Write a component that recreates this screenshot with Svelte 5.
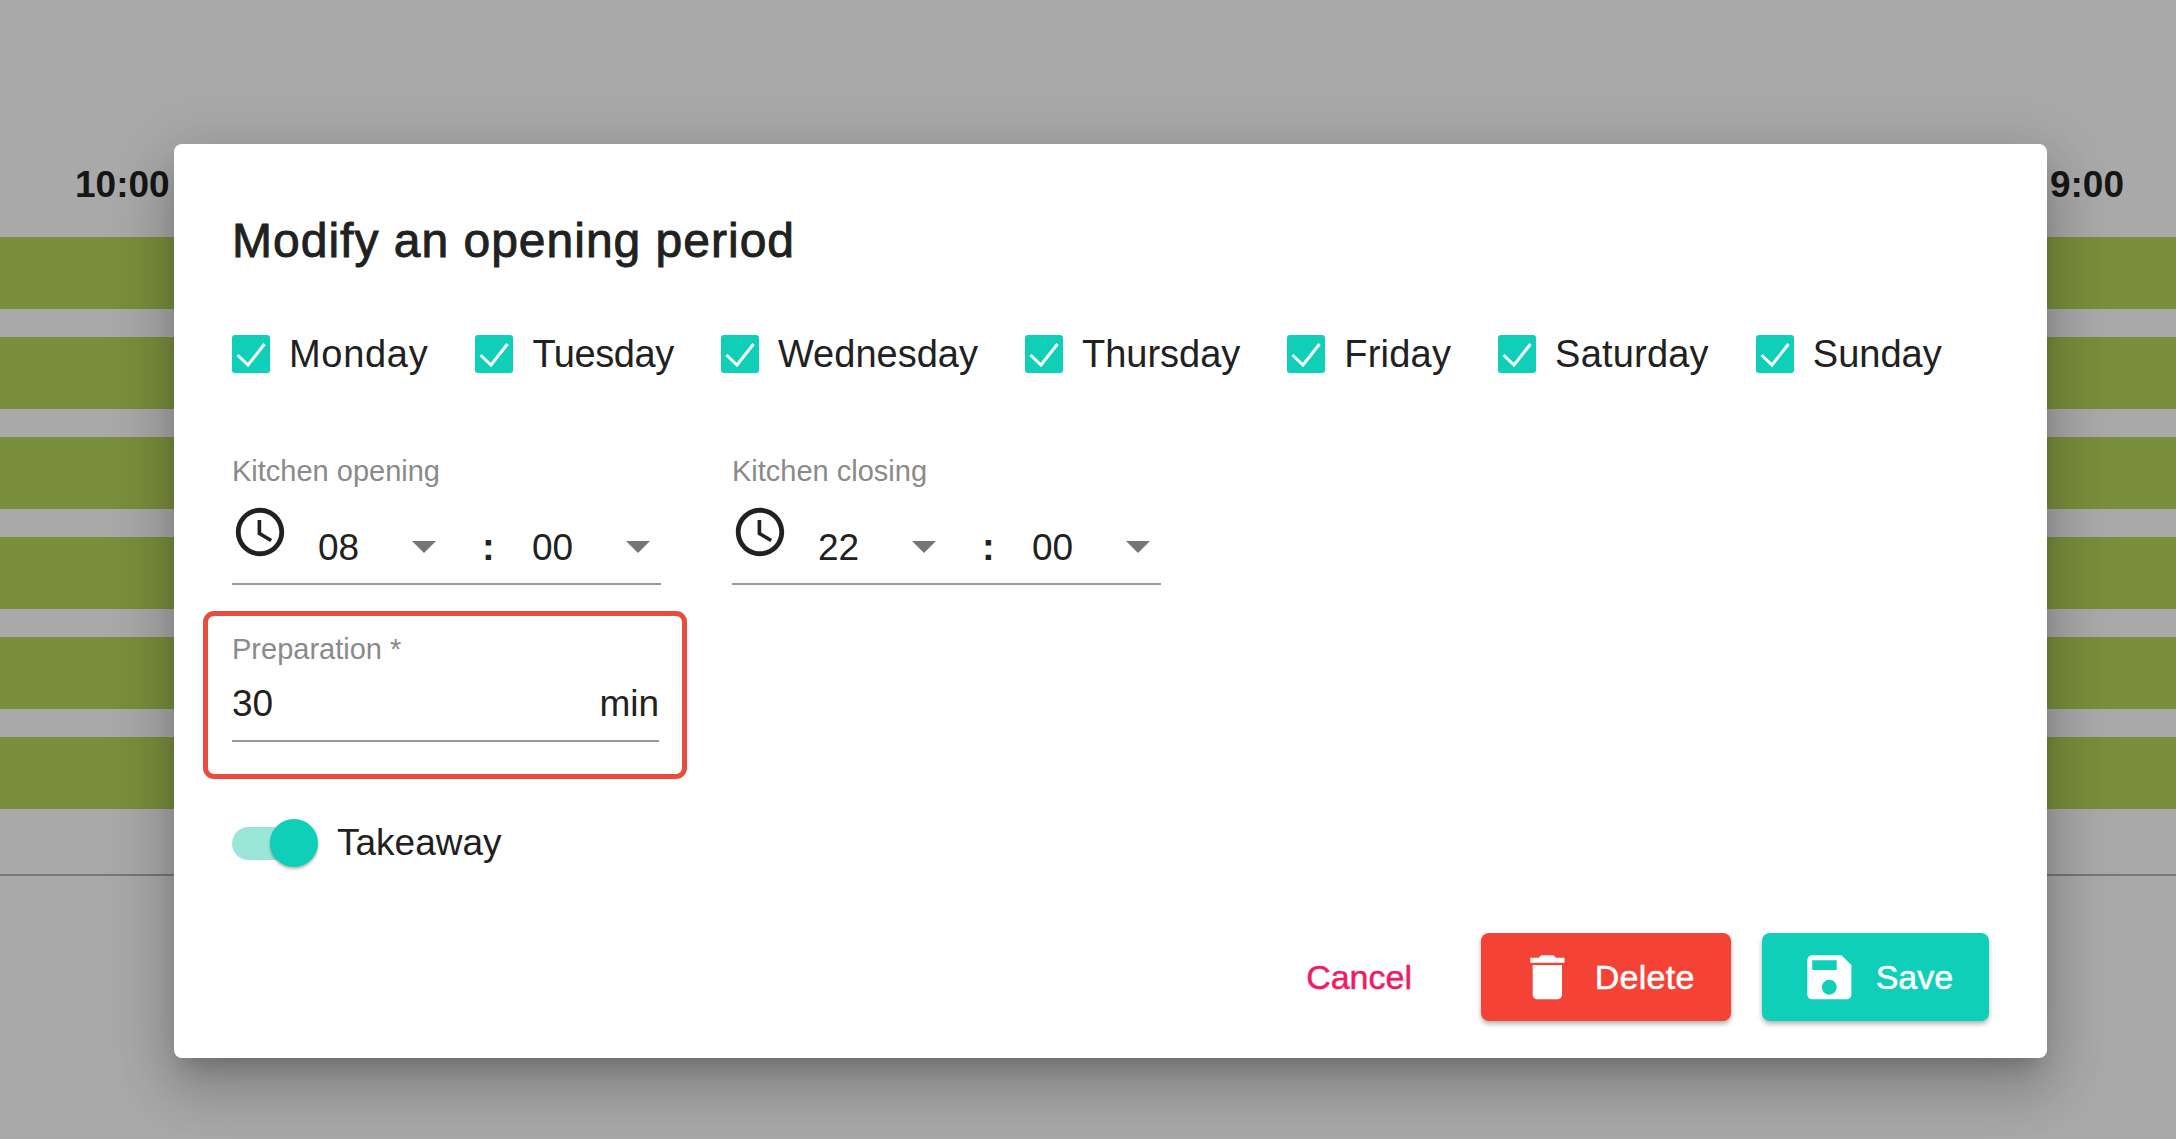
<script>
	const days = ['Monday', 'Tuesday', 'Wednesday', 'Thursday', 'Friday', 'Saturday', 'Sunday'];
	const bars = [1, 2, 3, 4, 5, 6];
	const periods = [
		{ label: 'Kitchen opening', hour: '08', minute: '00' },
		{ label: 'Kitchen closing', hour: '22', minute: '00' }
	];
</script>

<div class="page">
	<div class="hours">
		<span>10:00</span>
		<span>9:00</span>
	</div>
	<div class="bars">
		{#each bars as bar (bar)}
			<div class="bar"></div>
		{/each}
	</div>
	<div class="axis"></div>

	<div class="dialog">
		<h2 class="title">Modify an opening period</h2>

		<div class="days">
			{#each days as day (day)}
				<div class="day">
					<span class="check">
						<svg viewBox="0 0 38 38" width="38" height="38">
							<path d="M5.5 20 L16 30 L32.5 9" fill="none" stroke="#fff" stroke-width="3" />
						</svg>
					</span>
					<span class="day-name">{day}</span>
				</div>
			{/each}
		</div>

		<div class="times">
			{#each periods as period (period.label)}
				<div class="time-field">
					<div class="small-label">{period.label}</div>
					<div class="time-row">
						<svg class="clock" viewBox="0 0 24 24" width="58" height="58">
							<path d="M11.99 2C6.47 2 2 6.48 2 12s4.47 10 9.99 10C17.52 22 22 17.52 22 12S17.52 2 11.99 2zM12 20c-4.42 0-8-3.58-8-8s3.58-8 8-8 8 3.58 8 8-3.58 8-8 8z" />
							<path d="M12.5 7H11v6l5.25 3.15.75-1.23-4.5-2.67z" />
						</svg>
						<span class="select hour">
							<span>{period.hour}</span>
							<i class="arrow"></i>
						</span>
						<b class="colon">:</b>
						<span class="select minute">
							<span>{period.minute}</span>
							<i class="arrow"></i>
						</span>
					</div>
				</div>
			{/each}
		</div>

		<div class="highlight">
			<div class="small-label">Preparation *</div>
			<div class="prep-row">
				<span>30</span>
				<span>min</span>
			</div>
		</div>

		<div class="switch-row">
			<span class="switch">
				<span class="track"></span>
				<span class="knob"></span>
			</span>
			<span>Takeaway</span>
		</div>

		<div class="actions">
			<button class="cancel">Cancel</button>
			<button class="raised delete">
				<svg viewBox="0 0 24 24" width="58.7" height="58.7">
					<path d="M6 19c0 1.1.9 2 2 2h8c1.1 0 2-.9 2-2V7H6v12zM19 4h-3.5l-1-1h-5l-1 1H5v2h14V4z" />
				</svg>
				<span>Delete</span>
			</button>
			<button class="raised save">
				<svg viewBox="0 0 24 24" width="58.7" height="58.7">
					<path d="M17 3H5c-1.11 0-2 .9-2 2v14c0 1.1.89 2 2 2h14c1.1 0 2-.9 2-2V7l-4-4zm-5 16c-1.66 0-3-1.34-3-3s1.34-3 3-3 3 1.34 3 3-1.34 3-3 3zm3-10H5V5h10v4z" />
				</svg>
				<span>Save</span>
			</button>
		</div>
	</div>
</div>

<style>
	:global(body) {
		margin: 0;
		background: #a9a9a9;
		font-family: 'Liberation Sans', Arial, sans-serif;
		color: #212121;
	}

	.page {
		position: relative;
		height: 1139px;
		overflow: hidden;
		background: #a9a9a9;
	}

	.hours {
		display: flex;
		justify-content: space-between;
		height: 237px;
		padding: 163px 52px 0 75px;
		box-sizing: border-box;
		font-size: 37px;
		line-height: 43px;
		font-weight: 700;
		color: #161616;
	}

	.bars {
		display: flex;
		flex-direction: column;
		gap: 28.5px;
	}

	.bar {
		height: 71.5px;
		background: #7a8f3c;
	}

	.axis {
		height: 2px;
		margin-top: 65px;
		background: #777;
	}

	.dialog {
		position: absolute;
		left: 174px;
		top: 144px;
		width: 1873px;
		height: 914px;
		box-sizing: border-box;
		padding: 0 58px;
		background: #fff;
		border-radius: 8px;
		box-shadow:
			0 15px 21px -10px rgba(0, 0, 0, 0.2),
			0 33px 53px 4px rgba(0, 0, 0, 0.14),
			0 12px 64px 11px rgba(0, 0, 0, 0.12);
	}

	.title {
		margin: 0;
		padding-top: 69px;
		font-size: 48px;
		line-height: 56px;
		font-weight: 400;
		letter-spacing: 1px;
		-webkit-text-stroke: 0.9px #212121;
	}

	.days {
		display: flex;
		gap: 47px;
		margin-top: 62px;
		font-size: 38px;
		line-height: 46px;
	}

	.day {
		display: flex;
		align-items: center;
		gap: 19px;
	}

	.day:first-child .day-name {
		letter-spacing: 0.7px;
	}

	.day:nth-child(2) .day-name {
		letter-spacing: -0.4px;
	}

	.day:nth-child(5) .day-name,
	.day:nth-child(6) .day-name {
		letter-spacing: 0.2px;
	}

	.check {
		display: block;
		width: 38px;
		height: 38px;
		border-radius: 3px;
		background: #0fcfb9;
	}

	.check svg {
		display: block;
	}

	.times {
		display: flex;
		gap: 71px;
		margin-top: 77px;
	}

	.time-field {
		width: 429px;
	}

	.small-label {
		font-size: 29px;
		line-height: 34px;
		color: #8a8a8a;
	}

	.time-row {
		display: flex;
		height: 83px;
		margin-top: 12px;
		border-bottom: 2.5px solid #999;
		font-size: 37px;
	}

	.clock {
		flex: none;
		margin-top: 3px;
		margin-left: -1px;
		fill: #212121;
	}

	.select {
		display: flex;
		align-items: flex-start;
		padding-top: 26px;
		line-height: 43px;
	}

	.hour {
		margin-left: 29px;
		width: 118px;
		justify-content: space-between;
	}

	.minute {
		margin-left: 39px;
		width: 118px;
		justify-content: space-between;
	}

	.arrow {
		display: block;
		margin-top: 15px;
		border-left: 12px solid transparent;
		border-right: 12px solid transparent;
		border-top: 12px solid #757575;
	}

	.colon {
		margin-left: 46px;
		padding-top: 26px;
		line-height: 43px;
		font-size: 38px;
		width: 11px;
	}

	.highlight {
		width: 484px;
		height: 168px;
		margin: 26px 0 0 -29px;
		box-sizing: border-box;
		padding: 16px 23px 0 24px;
		border: 5px solid #e74c3c;
		border-radius: 11px;
	}

	.prep-row {
		display: flex;
		justify-content: space-between;
		height: 58px;
		padding-top: 16px;
		font-size: 37px;
		line-height: 44px;
		border-bottom: 2.5px solid #999;
	}

	.switch-row {
		display: flex;
		align-items: center;
		gap: 19px;
		margin-top: 40px;
		font-size: 37px;
		line-height: 48px;
	}

	.switch {
		position: relative;
		display: block;
		width: 86px;
		height: 48px;
	}

	.track {
		position: absolute;
		left: 0;
		right: 8px;
		top: 8px;
		height: 33px;
		border-radius: 17px;
		background: #9ae6d8;
	}

	.knob {
		position: absolute;
		right: 0;
		top: 0;
		width: 48px;
		height: 48px;
		border-radius: 50%;
		background: #0fcfb9;
		box-shadow: 0 2px 3px rgba(0, 0, 0, 0.3);
	}

	.actions {
		display: flex;
		justify-content: flex-end;
		align-items: center;
		margin-top: 66px;
	}

	button {
		border: 0;
		padding: 0;
		font-family: inherit;
		font-size: 34px;
		background: none;
		-webkit-text-stroke: 0.5px currentColor;
	}

	.cancel {
		color: #f01c63;
		margin-right: 69px;
	}

	.raised {
		display: flex;
		align-items: center;
		height: 88px;
		border-radius: 8px;
		color: #fff;
		box-shadow: 0 3px 5px rgba(0, 0, 0, 0.3);
	}

	.raised svg {
		fill: #fff;
	}

	.delete {
		width: 250px;
		padding-left: 37px;
		gap: 18px;
		margin-right: 31px;
		background: #f44336;
	}

	.delete span {
		letter-spacing: 0.3px;
	}

	.save {
		width: 227px;
		padding-left: 38px;
		gap: 17px;
		background: #0fcfb9;
	}
</style>
